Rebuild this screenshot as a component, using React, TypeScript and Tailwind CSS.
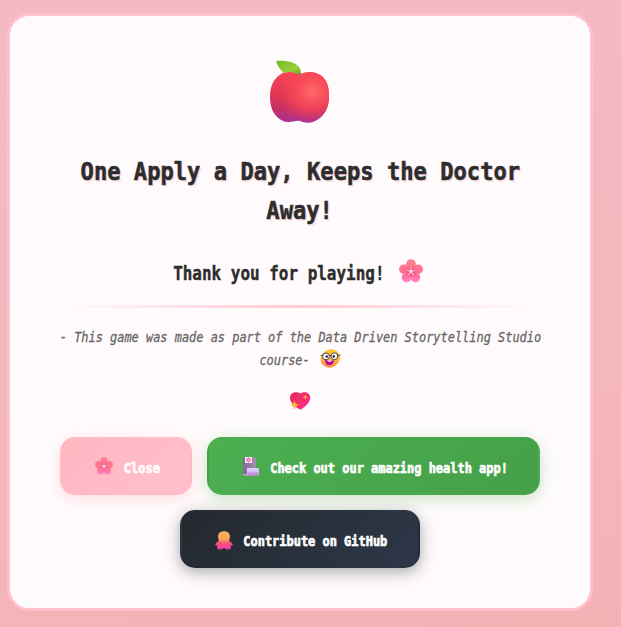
import type { ReactNode } from "react";

// Condensed monospace line: the outer box reserves the narrowed width.
function Line({ box, text, children }: { box: string; text: string; children: ReactNode }) {
  return (
    <span className={`flex shrink-0 justify-center ${box}`}>
      <span className={`block shrink-0 whitespace-pre ${text}`}>{children}</span>
    </span>
  );
}

function Apple() {
  return (
    <svg className="h-[64px] w-[60px]" viewBox="0 0 60 64">
      <defs>
        <linearGradient id="skin" x1="0.45" y1="0" x2="0.42" y2="1">
          <stop offset="0" stopColor="#f84758" />
          <stop offset="0.48" stopColor="#df3655" />
          <stop offset="0.72" stopColor="#c83065" />
          <stop offset="1" stopColor="#aa3297" />
        </linearGradient>
        <radialGradient id="shine" cx="0.72" cy="0.4" r="0.6">
          <stop offset="0" stopColor="#ff6a6c" />
          <stop offset="0.55" stopColor="#fb4854" stopOpacity="0.75" />
          <stop offset="1" stopColor="#ef4052" stopOpacity="0" />
        </radialGradient>
        <linearGradient id="leaf" x1="0" y1="0" x2="1" y2="1">
          <stop offset="0" stopColor="#73b82b" />
          <stop offset="0.65" stopColor="#9acf38" />
          <stop offset="1" stopColor="#619b30" />
        </linearGradient>
      </defs>
      <path fill="url(#skin)" d="M30 14C24 10 16 10 11 14C3 19 0 27 0 37C0 48 4 57 13 61C20 64 25 60 30 61C37 64 44 63 50 58C56 53 59 46 59 36C59 25 56 17 48 14C42 11 36 12 30 14Z" />
      <path fill="url(#shine)" d="M30 14C24 10 16 10 11 14C3 19 0 27 0 37C0 48 4 57 13 61C20 64 25 60 30 61C37 64 44 63 50 58C56 53 59 46 59 36C59 25 56 17 48 14C42 11 36 12 30 14Z" />
      <path fill="url(#leaf)" d="M6 1C17 0 25 2 29 7C31 10 31 13 31 15C27 14 24 12 19 12L14 13C10 10 7 5 6 1Z" />
    </svg>
  );
}

function Blossom({ className }: { className: string }) {
  return (
    <svg className={className} viewBox="0 0 24 24">
      <defs>
        <linearGradient id="petal" gradientUnits="userSpaceOnUse" x1="0" y1="0" x2="0" y2="24">
          <stop offset="0" stopColor="#ff8095" />
          <stop offset="0.65" stopColor="#ff6c8e" />
          <stop offset="1" stopColor="#ff8ad6" />
        </linearGradient>
        <radialGradient id="core">
          <stop offset="0.3" stopColor="#ee4574" />
          <stop offset="1" stopColor="#f4507a" stopOpacity="0" />
        </radialGradient>
      </defs>
      <g fill="url(#petal)">
        <circle cx="12" cy="5" r="4.8" />
        <circle cx="19.1" cy="10.2" r="4.8" />
        <circle cx="16.4" cy="18.6" r="4.8" />
        <circle cx="7.6" cy="18.6" r="4.8" />
        <circle cx="4.9" cy="10.2" r="4.8" />
        <circle cx="12" cy="12.5" r="6" />
      </g>
      <circle cx="12" cy="12.5" r="6" fill="url(#core)" />
      {[0, 72, 144, 216, 288].map((a) => (
        <path key={a} transform={`rotate(${a} 12 12.5)`} d="M12 12.5V8.8" stroke="#ffe1f6" strokeWidth="1" strokeLinecap="round" />
      ))}
      <circle cx="12" cy="12.5" r="1.6" fill="#fbd9ef" />
    </svg>
  );
}

function Nerd() {
  return (
    <svg className="h-[19px] w-[21px]" viewBox="0 0 21 19">
      <defs>
        <linearGradient id="face" x1="1" y1="0" x2="0" y2="1">
          <stop offset="0.35" stopColor="#ffc52d" />
          <stop offset="0.7" stopColor="#ffa044" />
          <stop offset="1" stopColor="#f36b78" />
        </linearGradient>
      </defs>
      <ellipse cx="10.3" cy="9.5" rx="10" ry="8.9" transform="rotate(-32 10.3 9.5)" fill="url(#face)" />
      <path d="M5 11Q9.5 12.5 14.2 11.2Q13.4 16 9 16.2Q5.3 15.8 5 11Z" fill="#b3009d" />
      <path d="M7.5 11.4L11.3 11.5L11 12.8H7.8Z" fill="#fff" />
      <g fill="#fff" stroke="#51424c" strokeWidth="1">
        <circle cx="6" cy="7.4" r="3.4" />
        <circle cx="14.4" cy="7.2" r="3.4" />
        <path fill="none" d="M9.4 6.7Q10.2 6 11 6.6M2.7 6.7L.6 6.3M17.8 6.4L20.4 6.2" />
      </g>
      <circle cx="6.8" cy="7.6" r="1.3" fill="#3c303d" />
      <circle cx="13.8" cy="7.4" r="1.3" fill="#3c303d" />
    </svg>
  );
}

function Heart() {
  return (
    <svg className="h-[18px] w-[21px]" viewBox="0 0 21 18">
      <defs>
        <linearGradient id="heart" x1="0" y1="0" x2="1" y2="1">
          <stop stopColor="#e9255d" />
          <stop offset="0.5" stopColor="#f42f6b" />
          <stop offset="1" stopColor="#ff2ba9" />
        </linearGradient>
      </defs>
      <path fill="url(#heart)" d="M10.2 1.6C13-.9 20-.5 20.2 5.5C20.2 11 14.7 15 11.4 17.2Q10.3 17.8 9 17C5 14.7 0 10.8 0 5.5C.2-.4 7.5-.9 10.2 1.6Z" />
      <path fill="#ffb83b" d="M4.5 8.4L5.8 11.7L9 13L5.8 14.4L4.5 18L3.2 14.4L.4 13L3.2 11.7ZM15.3 2.4L16 4.4L17.8 5L16 5.7L15.3 7.8L14.5 5.7L12.8 5L14.5 4.4Z" />
    </svg>
  );
}

function Boot() {
  return (
    <svg className="h-[19px] w-[18px]" viewBox="0 0 18 19">
      <defs>
        <linearGradient id="tower" x1="0" x2="1">
          <stop stopColor="#806a94" />
          <stop offset="1" stopColor="#a292ae" />
        </linearGradient>
        <linearGradient id="ward" x1="0" y1="0" x2="0" y2="1">
          <stop stopColor="#e0d0ff" />
          <stop offset="1" stopColor="#c9a7f0" />
        </linearGradient>
      </defs>
      <path fill="url(#tower)" d="M1 .5H14V18.5H1Z" />
      <path fill="url(#ward)" d="M5 11.6Q5 11 5.6 11H16.2Q17 11 17 11.8V18.5H5Z" />
      <path d="M5 15.8H17" stroke="#b592dc" strokeWidth=".8" />
      <rect x="1" y="17" width="4" height="1.5" fill="#b9a0d0" />
      <rect x="3" y="0" width="7" height="6" fill="#f4e5fc" />
      <path d="M6.5 .8V5.2M4.5 1.9L8.5 4.1M8.5 1.9L4.5 4.1" stroke="#f5528d" strokeWidth="1.3" />
      <circle cx="6.5" cy="3" r=".8" fill="#fff" />
      <path d="M6 16.6H8.5V18H6ZM9.7 16.6H12.2V18H9.7ZM13.2 16.6H15.5V18H13.2Z" fill="#cf6cc8" />
    </svg>
  );
}

function Octopus() {
  return (
    <svg className="h-[19px] w-[18px]" viewBox="0 0 18 19">
      <defs>
        <linearGradient id="octopus" x1="0" y1="0" x2="0" y2="1">
          <stop stopColor="#efb55d" />
          <stop offset="0.42" stopColor="#ffa05e" />
          <stop offset="0.62" stopColor="#f65c76" />
          <stop offset="1" stopColor="#ff2fae" />
        </linearGradient>
      </defs>
      <path fill="url(#octopus)" d="M9 .3C4.8.3 3 2.8 3 5.6C3 8 4.2 9 3.8 10C3 11 .2 12 .2 13.4C.4 14.5 1.8 14.4 3 14.6C2.2 15.8 1.2 16.6 2.6 17.4C3.4 17.8 3.8 18.6 5.6 18.6C7 18.6 7.8 17 9 17C10.2 17 11 18.6 12.4 18.6C14.2 18.6 14.6 17.8 15.4 17.4C16.8 16.6 15.8 15.8 15 14.6C16.2 14.4 17.6 14.5 17.8 13.4C17.8 12 15 11 14.2 10C13.8 9 15 8 15 5.6C15 2.8 13.2.3 9 .3Z" />
      <path d="M3.8 12.2Q6 12 6.9 13.9M14.2 12.2Q12 12 11.1 13.9" fill="none" stroke="#d5486c" strokeWidth=".8" />
    </svg>
  );
}

const buttonBase =
  "flex h-[58px] items-center gap-[10px] rounded-[15px] border-2 border-transparent pl-[33px] text-white";
const buttonText = "scale-x-[0.825] text-[14.5px] leading-[20px] font-bold [-webkit-text-stroke:0.7px_white]";
const titleText = "scale-x-[0.885] text-[25px] leading-[39px] font-bold [-webkit-text-stroke:0.6px_#2d2d2d]";

export default function App() {
  return (
    <main className="h-[627px] w-[621px] overflow-hidden bg-[linear-gradient(170deg,#f4b9c2_0%,#f4b8be_60%,#f3b1b4_100%)] pt-[13px] pl-[7px] font-['DejaVu_Sans_Mono',monospace]">
      <section className="flex h-[598px] w-[586px] flex-col items-center rounded-[22px] border-[3px] border-[#ffc0cb] bg-[#fffbfc] px-[50px] pt-[44px]">
        <Apple />
        <h1 className="mt-[28px] text-[#2d2d2d] [text-shadow:2px_2px_0_#ffe2e5]">
          <Line box="w-[439px]" text={titleText}>One Apply a Day, Keeps the Doctor</Line>
          <Line box="w-[439px]" text={titleText}>Away!</Line>
        </h1>
        <h2 className="mt-[27px] flex h-[30px] items-center gap-[14px] text-[#2d2d2d]">
          <Line box="w-[211px]" text="mt-[2px] scale-x-[0.84] text-[19px] leading-[28px] font-bold [-webkit-text-stroke:0.4px_#2d2d2d]">Thank you for playing!</Line>
          <Blossom className="mr-[4px] -mt-[3px] h-[24px] w-[24px]" />
        </h2>
        <div className="mt-[18px] h-[3px] w-[480px] shrink-0 bg-[linear-gradient(90deg,transparent,#ffc9d1,transparent)]" />
        <div className="mt-[18px] flex flex-col items-center text-[#666] italic [-webkit-text-stroke:0.3px_#666]">
          <Line box="w-[481px]" text="scale-x-[0.823] text-[14.5px] leading-[23px]">- This game was made as part of the Data Driven Storytelling Studio</Line>
          <div className="flex h-[23px] items-center gap-[10px]">
            <Line box="w-[50px]" text="scale-x-[0.823] text-[14.5px] leading-[23px]">course-</Line>
            <span className="-mt-[4px]"><Nerd /></span>
          </div>
        </div>
        <div className="mt-[20px] flex h-[18px] shrink-0 items-center"><Heart /></div>
        <div className="mt-[27px] flex w-[480px] shrink-0 flex-wrap justify-center gap-[15px]">
          <button className={`${buttonBase} w-[132px] bg-[linear-gradient(135deg,#ffb6c1,#ffc0cb)] shadow-[0_4px_15px_rgba(255,182,193,0.4)]`}>
            <Blossom className="h-[18px] w-[18px]" />
            <Line box="w-[37px] mt-[4px]" text={buttonText}>Close</Line>
          </button>
          <button className={`${buttonBase} w-[333px] bg-[linear-gradient(135deg,#4caf50,#45a049)] shadow-[0_4px_15px_rgba(76,175,80,0.3)]`}>
            <Boot />
            <Line box="w-[238px] mt-[4px]" text={buttonText}>Check out our amazing health app!</Line>
          </button>
          <button className={`${buttonBase} w-[240px] bg-[linear-gradient(135deg,#24292e,#2d3748)] shadow-[0_4px_15px_rgba(36,41,46,0.4)]`}>
            <span className="mt-[2px]"><Octopus /></span>
            <Line box="w-[144px] mt-[4px]" text={buttonText}>Contribute on GitHub</Line>
          </button>
        </div>
      </section>
    </main>
  );
}
